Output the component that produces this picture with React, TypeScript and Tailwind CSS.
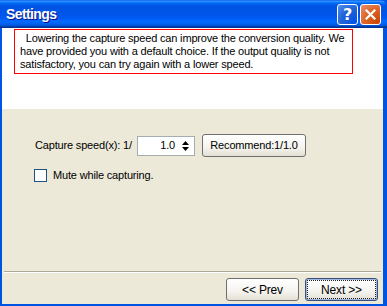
export default function App() {
  return (
    <div className="w-[387px] h-[306px] flex flex-col bg-[#0054e3] font-['Liberation_Sans',Arial,sans-serif] text-[11px] tracking-[-0.17px] text-black overflow-hidden">
      {/* Title bar */}
      <div className="h-[28px] shrink-0 flex items-center justify-between pl-[6px] pr-[6px] rounded-tr-[7px] bg-[linear-gradient(#0058ee_0%,#3593ff_4%,#288eff_6%,#127dff_8%,#036ffc_10%,#0262ee_14%,#0057e5_20%,#0054e3_24%,#0055eb_56%,#005bf5_66%,#026afe_76%,#0062ef_86%,#0052d6_92%,#0040ab_94%,#003092_100%)]">
        <span className="text-white font-bold text-[14px] tracking-[-0.6px] [text-shadow:1px_1px_#0f1089]">
          Settings
        </span>
        <div className="flex items-center gap-[2px] mt-[1px]">
          <div className="w-[21px] h-[21px] rounded-[3px] border border-white bg-[radial-gradient(circle_at_90%_90%,#0054e9_0%,#2263d5_55%,#4f8ff4_100%)] flex items-center justify-center text-white font-bold text-[16px] font-['DejaVu_Sans',sans-serif] leading-none">
            ?
          </div>
          <div className="w-[21px] h-[21px] rounded-[3px] border border-white bg-[radial-gradient(circle_at_90%_90%,#cc4600_0%,#dc6527_55%,#e99071_100%)] flex items-center justify-center">
            <svg width="11" height="11" viewBox="0 0 11 11">
              <path d="M1.5 1.5 L9.5 9.5 M9.5 1.5 L1.5 9.5" stroke="white" strokeWidth="2.2" strokeLinecap="square" />
            </svg>
          </div>
        </div>
      </div>

      {/* Body */}
      <div className="flex-1 flex flex-col ml-[2px] mr-[4px] mb-[2px] bg-[#ece9d8]">
        <div className="h-[81px] bg-white pt-[1px] pl-[12px]">
          <div className="w-[339px] h-[45px] border border-[#ff0000] pl-[5px] pt-[2px] leading-[13px] whitespace-pre">
            {"  Lowering the capture speed can improve the conversion quality. We\nhave provided you with a default choice. If the output quality is not\nsatisfactory, you can try again with a lower speed."}
          </div>
        </div>

        <div className="flex-1 flex flex-col">
          <div className="flex items-center mt-[25px] pl-[33px] h-[23px]">
            <span className="w-[102px]">Capture speed(x): 1/</span>
            <div className="w-[58px] h-[20px] border border-[#a5acb2] bg-white flex items-center justify-end pr-[4px] gap-[6px]">
              <span>1.0</span>
              <svg width="9" height="12" viewBox="0 0 9 12">
                <path d="M4.5 1 L8 5 L1 5 Z" fill="black" />
                <path d="M1 7 L8 7 L4.5 11 Z" fill="black" />
              </svg>
            </div>
            <button className="ml-[7px] w-[104px] h-[23px] rounded-[3px] border border-[#6f6f6f] bg-[linear-gradient(#ffffff,#f4f3ee_60%,#e3e0d5)] text-[11px]">
              Recommend:1/1.0
            </button>
          </div>

          <label className="flex items-center mt-[10px] pl-[32px]">
            <span className="w-[13px] h-[13px] border border-[#1c5180] bg-white" />
            <span className="ml-[6px]">Mute while capturing.</span>
          </label>

          <div className="mt-auto mx-[2px] h-[2px] border-t border-[#aca899] bg-white" />
          <div className="flex justify-end gap-[6px] pt-[5px] pb-[3px] pr-[5px]">
            <button className="w-[73px] h-[23px] rounded-[3px] border border-[#6f6f6f] bg-[linear-gradient(#ffffff,#f4f3ee_60%,#e3e0d5)] text-[12px]">
              &lt;&lt; Prev
            </button>
            <button className="w-[73px] h-[23px] rounded-[3px] border border-[#3e4f76] bg-[linear-gradient(#ffffff,#f4f3ee_60%,#e3e0d5)] p-[1px] shadow-[inset_0_0_0_1px_#9cb6e6]">
              <span className="w-full h-full flex items-center justify-center border border-dotted border-[#222] text-[12px]">
                Next &gt;&gt;
              </span>
            </button>
          </div>
        </div>
      </div>
    </div>
  );
}
